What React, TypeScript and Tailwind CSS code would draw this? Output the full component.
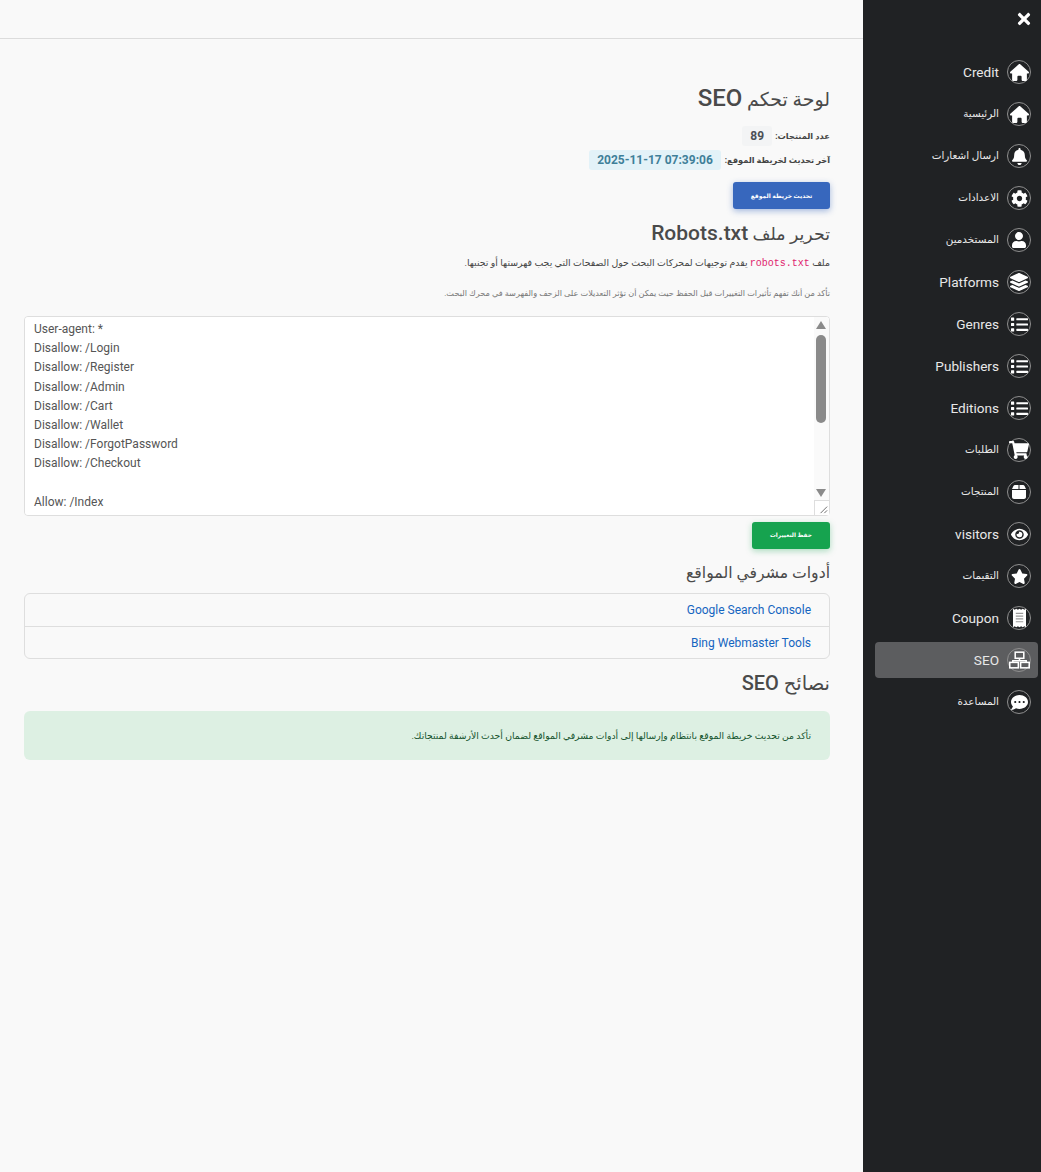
import { FaBell, FaCog, FaUser, FaLayerGroup, FaList, FaShoppingCart, FaEye, FaStar, FaCommentDots, FaTimes } from "react-icons/fa";
import { FaHouse, FaBox } from "react-icons/fa6";
import type { ComponentType } from "react";

function ReceiptIcon({ className }: { className?: string }) {
  return (
    <svg viewBox="0 0 14 20" className={className}>
      <path d="M0 0l1.75 1L3.5 0l1.75 1L7 0l1.75 1L10.5 0l1.75 1L14 0v20l-1.75-1-1.75 1-1.75-1L7 20l-1.75-1-1.75 1-1.75-1L0 20z" fill="#fff" />
      <path d="M3 5h8M3 8h8M3 11h8M3 14h8" stroke="#9a9a9a" strokeWidth="1.2" />
    </svg>
  );
}

function SitemapIcon({ className }: { className?: string }) {
  return (
    <svg viewBox="0 0 22 18" className={className} fill="none" stroke="#fff" strokeWidth="1.6">
      <rect x="6.5" y="0.8" width="9" height="6.4" />
      <path d="M11 7.2V10M4 11V9.8h14V11" />
      <rect x="0.8" y="11.5" width="9" height="5.7" />
      <rect x="12.2" y="11.5" width="9" height="5.7" />
    </svg>
  );
}

const menu: { label: string; icon: ComponentType<{ className?: string }>; size: string; active?: boolean }[] = [
  { label: "Credit", icon: FaHouse, size: "w-[19px] h-[19px]" },
  { label: "الرئيسية", icon: FaHouse, size: "w-[19px] h-[19px]" },
  { label: "ارسال اشعارات", icon: FaBell, size: "w-[17px] h-[17px]" },
  { label: "الاعدادات", icon: FaCog, size: "w-[17px] h-[17px]" },
  { label: "المستخدمين", icon: FaUser, size: "w-[16px] h-[16px]" },
  { label: "Platforms", icon: FaLayerGroup, size: "w-[18px] h-[18px]" },
  { label: "Genres", icon: FaList, size: "w-[17px] h-[17px]" },
  { label: "Publishers", icon: FaList, size: "w-[17px] h-[17px]" },
  { label: "Editions", icon: FaList, size: "w-[17px] h-[17px]" },
  { label: "الطلبات", icon: FaShoppingCart, size: "w-[20px] h-[20px]" },
  { label: "المنتجات", icon: FaBox, size: "w-[16px] h-[16px]" },
  { label: "visitors", icon: FaEye, size: "w-[17px] h-[17px]" },
  { label: "التقيمات", icon: FaStar, size: "w-[17px] h-[17px]" },
  { label: "Coupon", icon: ReceiptIcon, size: "w-[13px] h-[20px]" },
  { label: "SEO", icon: SitemapIcon, size: "w-[21px] h-[18px]", active: true },
  { label: "المساعدة", icon: FaCommentDots, size: "w-[17px] h-[17px]" },
];

const robots = `User-agent: *
Disallow: /Login
Disallow: /Register
Disallow: /Admin
Disallow: /Cart
Disallow: /Wallet
Disallow: /ForgotPassword
Disallow: /Checkout

Allow: /Index
Allow: /Products`;

function Sidebar() {
  return (
    <aside dir="rtl" className="w-[178px] shrink-0 bg-[#202224] min-h-[1172px] text-white">
      <div className="h-[50px] pr-[8px] pt-[10px] flex">
        <FaTimes className="w-[18px] h-[18px]" />
      </div>
      <nav className="flex flex-col gap-[6px] pt-[4px] pr-[3px] pl-[12px]">
        {menu.map((item) => (
          <a
            key={item.label}
            className={`flex items-center gap-[8px] h-[36px] pr-[7px] rounded-[4px] ${item.active ? "bg-[#5c5d5f]" : ""}`}
          >
            <span className="w-[24px] h-[24px] rounded-full border border-[#8f8f8f] flex items-center justify-center shrink-0">
              <item.icon className={`${item.size} shrink-0 text-white`} />
            </span>
            <span className={/[a-zA-Z]/.test(item.label) ? "text-[13.6px] text-[#e8e8e8]" : "text-[10.4px] text-[#e8e8e8]"}>
              {item.label}
            </span>
          </a>
        ))}
      </nav>
    </aside>
  );
}

export default function App() {
  return (
    <div className="flex min-h-[1172px] bg-[#f9f9f9] font-['Roboto','DejaVu_Sans',sans-serif] text-[#4a4a4a]">
      <main dir="rtl" className="flex-1 min-w-0">
        <header className="h-[39px] border-b border-[#dcdcdc] bg-[#f9f9f9]" />
        <div className="pr-[33px] pl-[24px] pt-[43px]">
          <h1 className="text-[19px] leading-[32px] font-normal text-[#4a4a4a]">
            لوحة تحكم <span className="text-[24px] font-medium">SEO</span>
          </h1>
          <div className="mt-[9px] flex items-center gap-[3px] h-[22px]">
            <span className="text-[8.3px] font-bold text-[#444]">عدد المنتجات:</span>
            <span className="px-[8px] h-[20px] leading-[20px] rounded-[3px] bg-[#f3f4f5] text-[12px] font-bold text-[#4b5056]">89</span>
          </div>
          <div className="mt-[3px] flex items-center gap-[4px] h-[20px]">
            <span className="text-[8.2px] font-bold text-[#444]">آخر تحديث لخريطة الموقع:</span>
            <span dir="ltr" className="px-[8px] h-[20px] leading-[20px] rounded-[3px] bg-[#e3f2f8] text-[12px] font-bold text-[#3f7f99]">2025-11-17 07:39:06</span>
          </div>
          <button className="mt-[12px] block w-[97px] h-[27px] rounded-[3px] bg-[#3767bd] text-white text-[6px] font-bold shadow-[0_2px_6px_rgba(55,103,189,0.45)]">
            تحديث خريطة الموقع
          </button>
          <h2 className="mt-[10px] text-[17.4px] leading-[28px] font-normal">
            تحرير ملف <span className="text-[21px] font-medium">Robots.txt</span>
          </h2>
          <p className="mt-[7px] text-[9.4px] leading-[16px] text-[#444]">
            ملف <code className="font-['Liberation_Mono',monospace] text-[10px] text-[#e0246e]">robots.txt</code> يقدم توجيهات لمحركات البحث حول الصفحات التي يجب فهرستها أو تجنبها.
          </p>
          <p className="mt-[13px] text-[8.2px] leading-[16px] text-[#777]">
            تأكد من أنك تفهم تأثيرات التغييرات قبل الحفظ حيث يمكن أن تؤثر التعديلات على الزحف والفهرسة في محرك البحث.
          </p>
          <div className="relative mt-[15px]">
            <textarea
              dir="ltr"
              readOnly
              defaultValue={robots}
              className="block w-full h-[200px] rounded-[4px] border border-[#dedede] bg-white px-[9px] py-[3px] text-[12px] leading-[19.2px] text-[#555] outline-none resize-none"
            />
            {/* scrollbar is hidden in the headless browser, so it is drawn over the textarea */}
            <div className="absolute top-[1px] right-[1px] w-[15px] h-[198px] bg-[#fafafa] rounded-tr-[4px]">
              <div className="absolute top-[4px] left-[2px] w-0 h-0 border-x-[5px] border-x-transparent border-b-[8px] border-b-[#8a8a8a]" />
              <div className="absolute top-[18px] left-[2px] w-[10px] h-[88px] rounded-[5px] bg-[#8a8a8a]" />
              <div className="absolute top-[172px] left-[2px] w-0 h-0 border-x-[5px] border-x-transparent border-t-[8px] border-t-[#8a8a8a]" />
              <div className="absolute bottom-0 left-0 w-[15px] h-[15px] bg-white border-l border-t border-[#dedede]">
                <svg viewBox="0 0 15 15" className="w-full h-full">
                  <path d="M13 6 6 13M13 10l-3 3" stroke="#666" strokeWidth="1" />
                </svg>
              </div>
            </div>
          </div>
          <button className="mt-[6px] block w-[78px] h-[27px] rounded-[3px] bg-[#16a34f] text-white text-[5.8px] font-bold shadow-[0_2px_6px_rgba(22,163,79,0.35)]">
            حفظ التغييرات
          </button>
          <h3 className="mt-[11px] text-[15.7px] leading-[26px] font-normal">أدوات مشرفي المواقع</h3>
          <div className="mt-[7px] rounded-[6px] border border-[#dedede] text-[12px] text-[#1565c0]">
            <div className="h-[33px] flex items-center pr-[18px] border-b border-[#dedede]">
              <a dir="ltr">Google Search Console</a>
            </div>
            <div className="h-[31px] flex items-center pr-[18px]">
              <a dir="ltr">Bing Webmaster Tools</a>
            </div>
          </div>
          <h3 className="mt-[11px] text-[19.5px] leading-[26px] font-normal">
            نصائح <span className="text-[20px] font-medium">SEO</span>
          </h3>
          <div className="mt-[14px] h-[49px] rounded-[6px] bg-[#ddf0e3] flex items-center pr-[19px] text-[9.25px] text-[#14532d]">
            تأكد من تحديث خريطة الموقع بانتظام وإرسالها إلى أدوات مشرفي المواقع لضمان أحدث الأرشفة لمنتجاتك.
          </div>
        </div>
      </main>
      <Sidebar />
    </div>
  );
}
